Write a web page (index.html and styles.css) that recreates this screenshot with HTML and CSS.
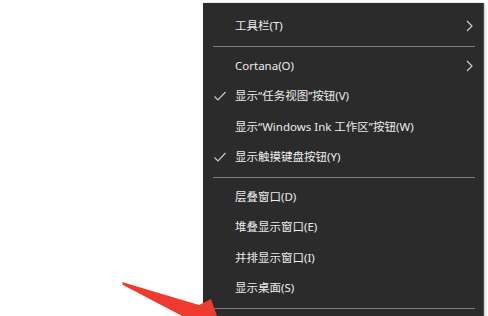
FILE: index.html
```html
<!DOCTYPE html>
<html lang="zh-CN">

<head>
    <meta charset="UTF-8">
    <title>任务栏菜单</title>
    <link rel="stylesheet" href="styles.css">
</head>

<body>

    <div class="menu">
        <div class="item">工具栏(T)
            <svg class="chevron" viewBox="0 0 7 12"><path d="M1 1 L6 6 L1 11" /></svg>
        </div>
        <div class="sep"></div>
        <div class="item">Cortana(O)
            <svg class="chevron" viewBox="0 0 7 12"><path d="M1 1 L6 6 L1 11" /></svg>
        </div>
        <div class="item">
            <svg class="check" viewBox="0 0 12 10"><path d="M0.5 5.5 L4 9 L11.5 1" /></svg>
            显示“任务视图”按钮(V)
        </div>
        <div class="item">显示“Windows Ink 工作区”按钮(W)</div>
        <div class="item">
            <svg class="check" viewBox="0 0 12 10"><path d="M0.5 5.5 L4 9 L11.5 1" /></svg>
            显示触摸键盘按钮(Y)
        </div>
        <div class="sep"></div>
        <div class="item">层叠窗口(D)</div>
        <div class="item">堆叠显示窗口(E)</div>
        <div class="item">并排显示窗口(I)</div>
        <div class="item">显示桌面(S)</div>
        <div class="sep"></div>
    </div>

    <svg class="arrow" viewBox="0 0 488 316">
        <polygon points="122,282 199,305 211,299 224,336 172,331 186,318 123,285" />
    </svg>

</body>

</html>
```

FILE: styles.css
```css
html,
body {
    margin: 0;
    height: 100%;
    overflow: hidden;
}

body {
    background: #fff;
    padding: 3px 0 0 203px;
    box-sizing: border-box;
    font-family: "Noto Sans", "Noto Sans CJK SC", sans-serif;
}

.menu {
    width: 280px;
    background: #2b2b2b;
    border-right: 1px solid #4a4a4a;
    padding-top: 8px;
    height: 340px;
    box-shadow: 1px 0 2px rgba(0, 0, 0, 0.25);
}

.item {
    position: relative;
    height: 30.5px;
    line-height: 30.5px;
    padding-left: 32px;
    font-size: 11.5px;
    color: #ececec;
    white-space: nowrap;
}

.sep {
    height: 1px;
    margin: 4px 8px 4px 10px;
    background: #7c7c7c;
}

.check {
    position: absolute;
    left: 11px;
    top: 10px;
    width: 12px;
    height: 10px;
    fill: none;
    stroke: #cfcfcf;
    stroke-width: 1.1;
}

.chevron {
    position: absolute;
    right: 10px;
    top: 9px;
    width: 7px;
    height: 12px;
    fill: none;
    stroke: #cfcfcf;
    stroke-width: 1.2;
}

.arrow {
    position: absolute;
    left: 0;
    top: 0;
    width: 488px;
    height: 316px;
    fill: #ee3b30;
}
```
